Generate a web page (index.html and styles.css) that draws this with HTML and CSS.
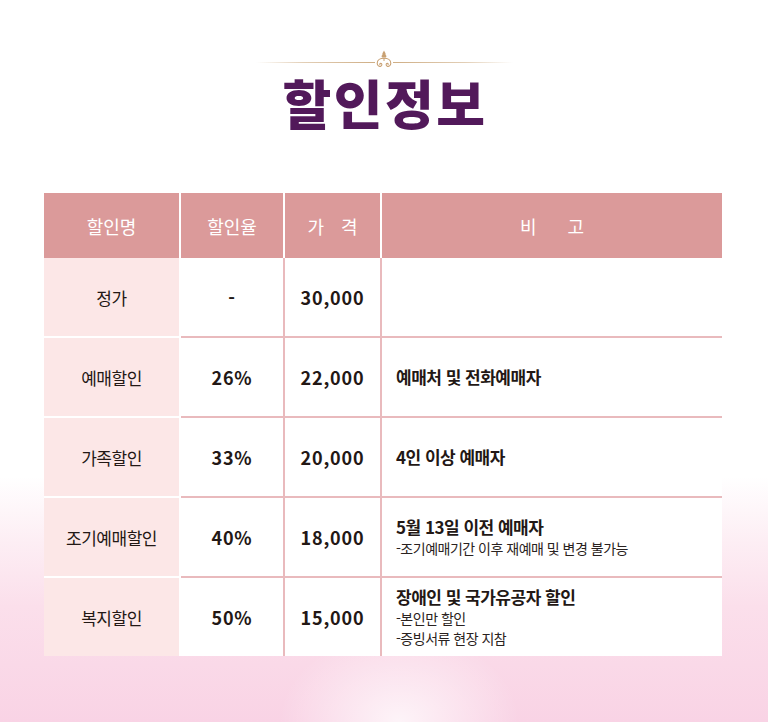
FILE: index.html
```html
<!DOCTYPE html>
<html lang="ko">
<head>
<meta charset="utf-8">
<title>할인정보</title>
<link rel="stylesheet" href="styles.css">
</head>
<body>
<div class="page">
  <div class="ornament">
    <span class="line line-left"></span>
    <svg class="flourish" width="18" height="20" viewBox="0 0 18 20" aria-hidden="true">
      <path d="M9 0.5 C9.8 2.2 11 3.2 10.6 5 C11.6 5.4 11.7 6.8 10.9 7.4 L7.1 7.4 C6.3 6.8 6.4 5.4 7.4 5 C7 3.2 8.2 2.2 9 0.5 Z" fill="#c9a173"/>
      <path d="M9 8.2 C5.5 8.2 2.2 10 2.2 13.2 C2.2 15.8 4.3 16.8 5.8 16.2 C7.3 15.6 7.2 13.4 5.7 13.3 C4.9 13.3 4.6 14 4.9 14.6" fill="none" stroke="#c9a173" stroke-width="1.1" stroke-linecap="round"/>
      <path d="M9 8.2 C12.5 8.2 15.8 10 15.8 13.2 C15.8 15.8 13.7 16.8 12.2 16.2 C10.7 15.6 10.8 13.4 12.3 13.3 C13.1 13.3 13.4 14 13.1 14.6" fill="none" stroke="#c9a173" stroke-width="1.1" stroke-linecap="round"/>
      <path d="M9 8.2 L9 11" stroke="#c9a173" stroke-width="1"/>
    </svg>
    <span class="line line-right"></span>
  </div>
  <h1 class="title">할인정보</h1>

  <div class="table">
    <div class="cell head c1">할인명</div>
    <div class="cell head c2">할인율</div>
    <div class="cell head c3 spaced">가 격</div>
    <div class="cell head c4 wide">비 고</div>

    <div class="cell name">정가</div>
    <div class="cell num c2">-</div>
    <div class="cell num c3">30,000</div>
    <div class="cell note"></div>

    <div class="cell name">예매할인</div>
    <div class="cell num c2">26%</div>
    <div class="cell num c3">22,000</div>
    <div class="cell note"><p class="note-main">예매처 및 전화예매자</p></div>

    <div class="cell name">가족할인</div>
    <div class="cell num c2">33%</div>
    <div class="cell num c3">20,000</div>
    <div class="cell note"><p class="note-main">4인 이상 예매자</p></div>

    <div class="cell name">조기예매할인</div>
    <div class="cell num c2">40%</div>
    <div class="cell num c3">18,000</div>
    <div class="cell note">
      <p class="note-main">5월 13일 이전 예매자</p>
      <p class="note-sub">-조기예매기간 이후 재예매 및 변경 불가능</p>
    </div>

    <div class="cell name last">복지할인</div>
    <div class="cell num c2 last">50%</div>
    <div class="cell num c3 last">15,000</div>
    <div class="cell note last">
      <p class="note-main gap">장애인 및 국가유공자 할인</p>
      <p class="note-sub">-본인만 할인</p>
      <p class="note-sub">-증빙서류 현장 지참</p>
    </div>
  </div>
</div>
</body>
</html>
```
FILE: styles.css
```css
html, body {
  margin: 0;
  padding: 0;
}

body {
  font-family: "Noto Sans CJK KR", "Noto Sans", sans-serif;
  color: #231815;
}

.page {
  width: 768px;
  height: 722px;
  overflow: hidden;
  box-sizing: border-box;
  padding-top: 50px;
  background:
    radial-gradient(ellipse 120px 90px at 52% 100%, rgba(255,255,255,0.75) 0%, rgba(255,255,255,0) 100%),
    linear-gradient(to bottom, #ffffff 0%, #ffffff 66%, #fdeef4 75%, #fbdfeb 84%, #f9d3e5 100%);
}

.ornament {
  width: 257px;
  margin: 0 auto;
  display: flex;
  align-items: flex-start;
  height: 20px;
}

.line {
  flex: 1;
  height: 1px;
  margin-top: 12px;
}

.line-left {
  background: linear-gradient(to right, rgba(207,174,133,0) 0%, rgba(207,174,133,0.6) 40%, #cfae85 100%);
}

.line-right {
  background: linear-gradient(to left, rgba(207,174,133,0) 0%, rgba(207,174,133,0.6) 40%, #cfae85 100%);
}

.flourish {
  display: block;
  flex: none;
}

.title {
  margin: 1px 0 0;
  padding-left: 2px;
  text-align: center;
  font-size: 53px;
  line-height: 62px;
  font-weight: 900;
  letter-spacing: 2.5px;
  color: #52195a;
}

.table {
  margin: 60px 0 0 44px;
  width: 678px;
  display: grid;
  grid-template-columns: 137px 104px 97px 340px;
  grid-template-rows: 65px 80px 80px 80px 80px 78px;
}

.cell {
  box-sizing: border-box;
  display: flex;
  align-items: center;
  justify-content: center;
  text-align: center;
}

.head {
  background: #db9a9a;
  color: #ffffff;
  font-size: 18px;
  font-weight: 400;
  border-right: 2px solid #ffffff;
}

.head.c4 {
  border-right: 0;
}

.spaced {
  word-spacing: 12px;
}

.wide {
  word-spacing: 26px;
}

.name {
  background: #fce7e7;
  font-size: 17px;
  letter-spacing: -0.5px;
  border-right: 2px solid #ffffff;
  border-bottom: 2px solid #ffffff;
}

.num {
  background: #ffffff;
  font-size: 18px;
  font-weight: 700;
  letter-spacing: 0.8px;
  border-right: 2px solid #e9babd;
  border-bottom: 2px solid #e9babd;
}

.note {
  background: #ffffff;
  border-bottom: 2px solid #e9babd;
  flex-direction: column;
  align-items: flex-start;
  justify-content: center;
  text-align: left;
  padding-left: 14px;
}

.cell.last {
  border-bottom: 0;
}

.note p {
  margin: 0;
}

.note-main {
  font-size: 17px;
  font-weight: 700;
  line-height: 22px;
  letter-spacing: -0.5px;
}

.note-main.gap {
  margin-bottom: 0 !important;
}

.note-sub {
  font-size: 14px;
  line-height: 20px;
  letter-spacing: -0.5px;
  color: #2a2220;
}
```
